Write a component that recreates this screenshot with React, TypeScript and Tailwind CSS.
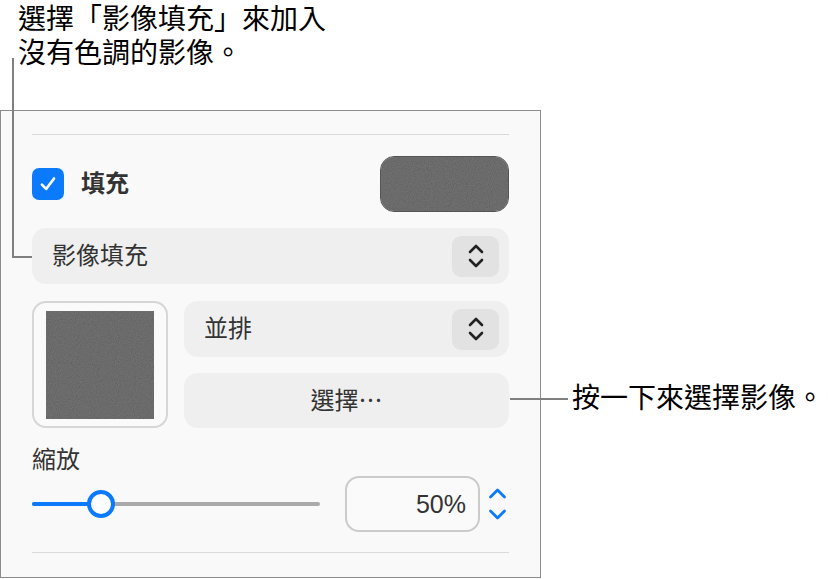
import React from 'react';

const cjk = "font-['Liberation_Sans','Noto_Sans_CJK_TC',sans-serif]";

function Chevrons({ className = '' }: { className?: string }) {
  return (
    <svg viewBox="0 0 16 26" className={className} fill="none" stroke="currentColor" strokeWidth={2.6} strokeLinecap="round" strokeLinejoin="round">
      <path d="M2 9 L8 3 L14 9" />
      <path d="M2 17 L8 23 L14 17" />
    </svg>
  );
}

function Noise({ id }: { id: string }) {
  return (
    <svg className="w-full h-full block" preserveAspectRatio="none">
      <filter id={id}>
        <feTurbulence type="fractalNoise" baseFrequency="0.95" numOctaves={2} seed={3} />
        <feColorMatrix type="matrix" values="1 0 0 0 0  1 0 0 0 0  1 0 0 0 0  0 0 0 0 0.14" />
      </filter>
      <rect width="100%" height="100%" fill="#5e5e5e" />
      <rect width="100%" height="100%" filter={`url(#${id})`} />
    </svg>
  );
}

function PopUp({ label }: { label: string }) {
  return (
    <div className="h-[56px] rounded-[14px] bg-[#efefef] flex items-center justify-between pl-[20px] pr-[10px]">
      <span className="text-[24px] leading-none text-[#333]">{label}</span>
      <div className="w-[47px] h-[41px] rounded-[9px] bg-[#e2e2e2] flex items-center justify-center text-[#222]">
        <Chevrons className="w-[16px] h-[26px]" />
      </div>
    </div>
  );
}

export default function App() {
  return (
    <div className={`relative w-[828px] h-[579px] bg-white overflow-hidden ${cjk}`}>
      <div className="h-[110px] pl-[18px] pt-[3px]">
        <p className="text-[28px] leading-[34px] text-black">
          選擇「影像填充」來加入
          <br />
          沒有色調的影像。
        </p>
      </div>

      <div className="w-[541px] h-[468px] border border-[#8c8c8c] bg-[#f9f9f9] px-[31px] flex flex-col">
        <div className="mt-[23px] h-px bg-[#dadada]" />

        <div className="mt-[21px] h-[56px] flex items-center justify-between">
          <div className="flex items-center gap-[17px]">
            <div className="w-[32px] h-[32px] rounded-[7px] bg-[#0b7aff] flex items-center justify-center">
              <svg viewBox="0 0 20 20" className="w-[22px] h-[22px]" fill="none" stroke="white" strokeWidth={2.4} strokeLinecap="round" strokeLinejoin="round">
                <path d="M4.5 10.5 L8.3 14.5 L15.5 5" />
              </svg>
            </div>
            <span className="text-[24px] font-bold leading-none text-[#333]">填充</span>
          </div>
          <div className="w-[129px] h-[56px] rounded-[14px] overflow-hidden border border-[#555]">
            <Noise id="n1" />
          </div>
        </div>

        <div className="mt-[16px]">
          <PopUp label="影像填充" />
        </div>

        <div className="mt-[17px] flex gap-[16px]">
          <div className="w-[136px] h-[127px] rounded-[14px] border-2 border-[#d6d6d6] bg-[#fafafa] flex items-center justify-center">
            <div className="w-[108px] h-[108px]">
              <Noise id="n2" />
            </div>
          </div>
          <div className="flex-1 flex flex-col gap-[16px]">
            <PopUp label="並排" />
            <div className="h-[55px] rounded-[14px] bg-[#efefef] flex items-center justify-center">
              <span className="text-[24px] leading-none text-[#333]">選擇⋯</span>
            </div>
          </div>
        </div>

        <div className="mt-[16px] h-[32px] flex items-center text-[24px] text-[#333]">縮放</div>

        <div className="h-[56px] flex items-center">
          <div className="relative w-[288px] h-[4px] rounded-full bg-[#a9a9a9]">
            <div className="absolute left-0 top-0 h-full w-[62px] rounded-full bg-[#0b7aff]" />
            <div className="absolute left-[55px] top-1/2 -translate-y-1/2 w-[28px] h-[28px] rounded-full bg-white border-[4px] border-[#0b7aff]" />
          </div>
          <div className="ml-[25px] w-[135px] h-[56px] rounded-[14px] border-2 border-[#cbcbcb] bg-[#fafafa] flex items-center justify-end pr-[12px]">
            <span className="text-[25px] leading-none text-[#333]">50%</span>
          </div>
          <svg viewBox="0 0 19 36" className="ml-[8px] w-[19px] h-[36px] text-[#0b7aff]" fill="none" stroke="currentColor" strokeWidth={2.8} strokeLinecap="round" strokeLinejoin="round">
            <path d="M2.5 11 L9.5 4 L16.5 11" />
            <path d="M2.5 25 L9.5 32 L16.5 25" />
          </svg>
        </div>

        <div className="mt-[20px] h-px bg-[#dadada]" />
      </div>

      {/* callout lines */}
      <div className="absolute left-[12px] top-[58px] w-[2px] h-[200px] bg-[#808080]" />
      <div className="absolute left-[12px] top-[256px] w-[20px] h-[2px] bg-[#808080]" />
      <div className="absolute left-[510px] top-[398px] w-[58px] h-[2px] bg-[#808080]" />
      <p className="absolute left-[572px] top-[382px] text-[28px] leading-[34px] text-black">按一下來選擇影像。</p>
    </div>
  );
}
